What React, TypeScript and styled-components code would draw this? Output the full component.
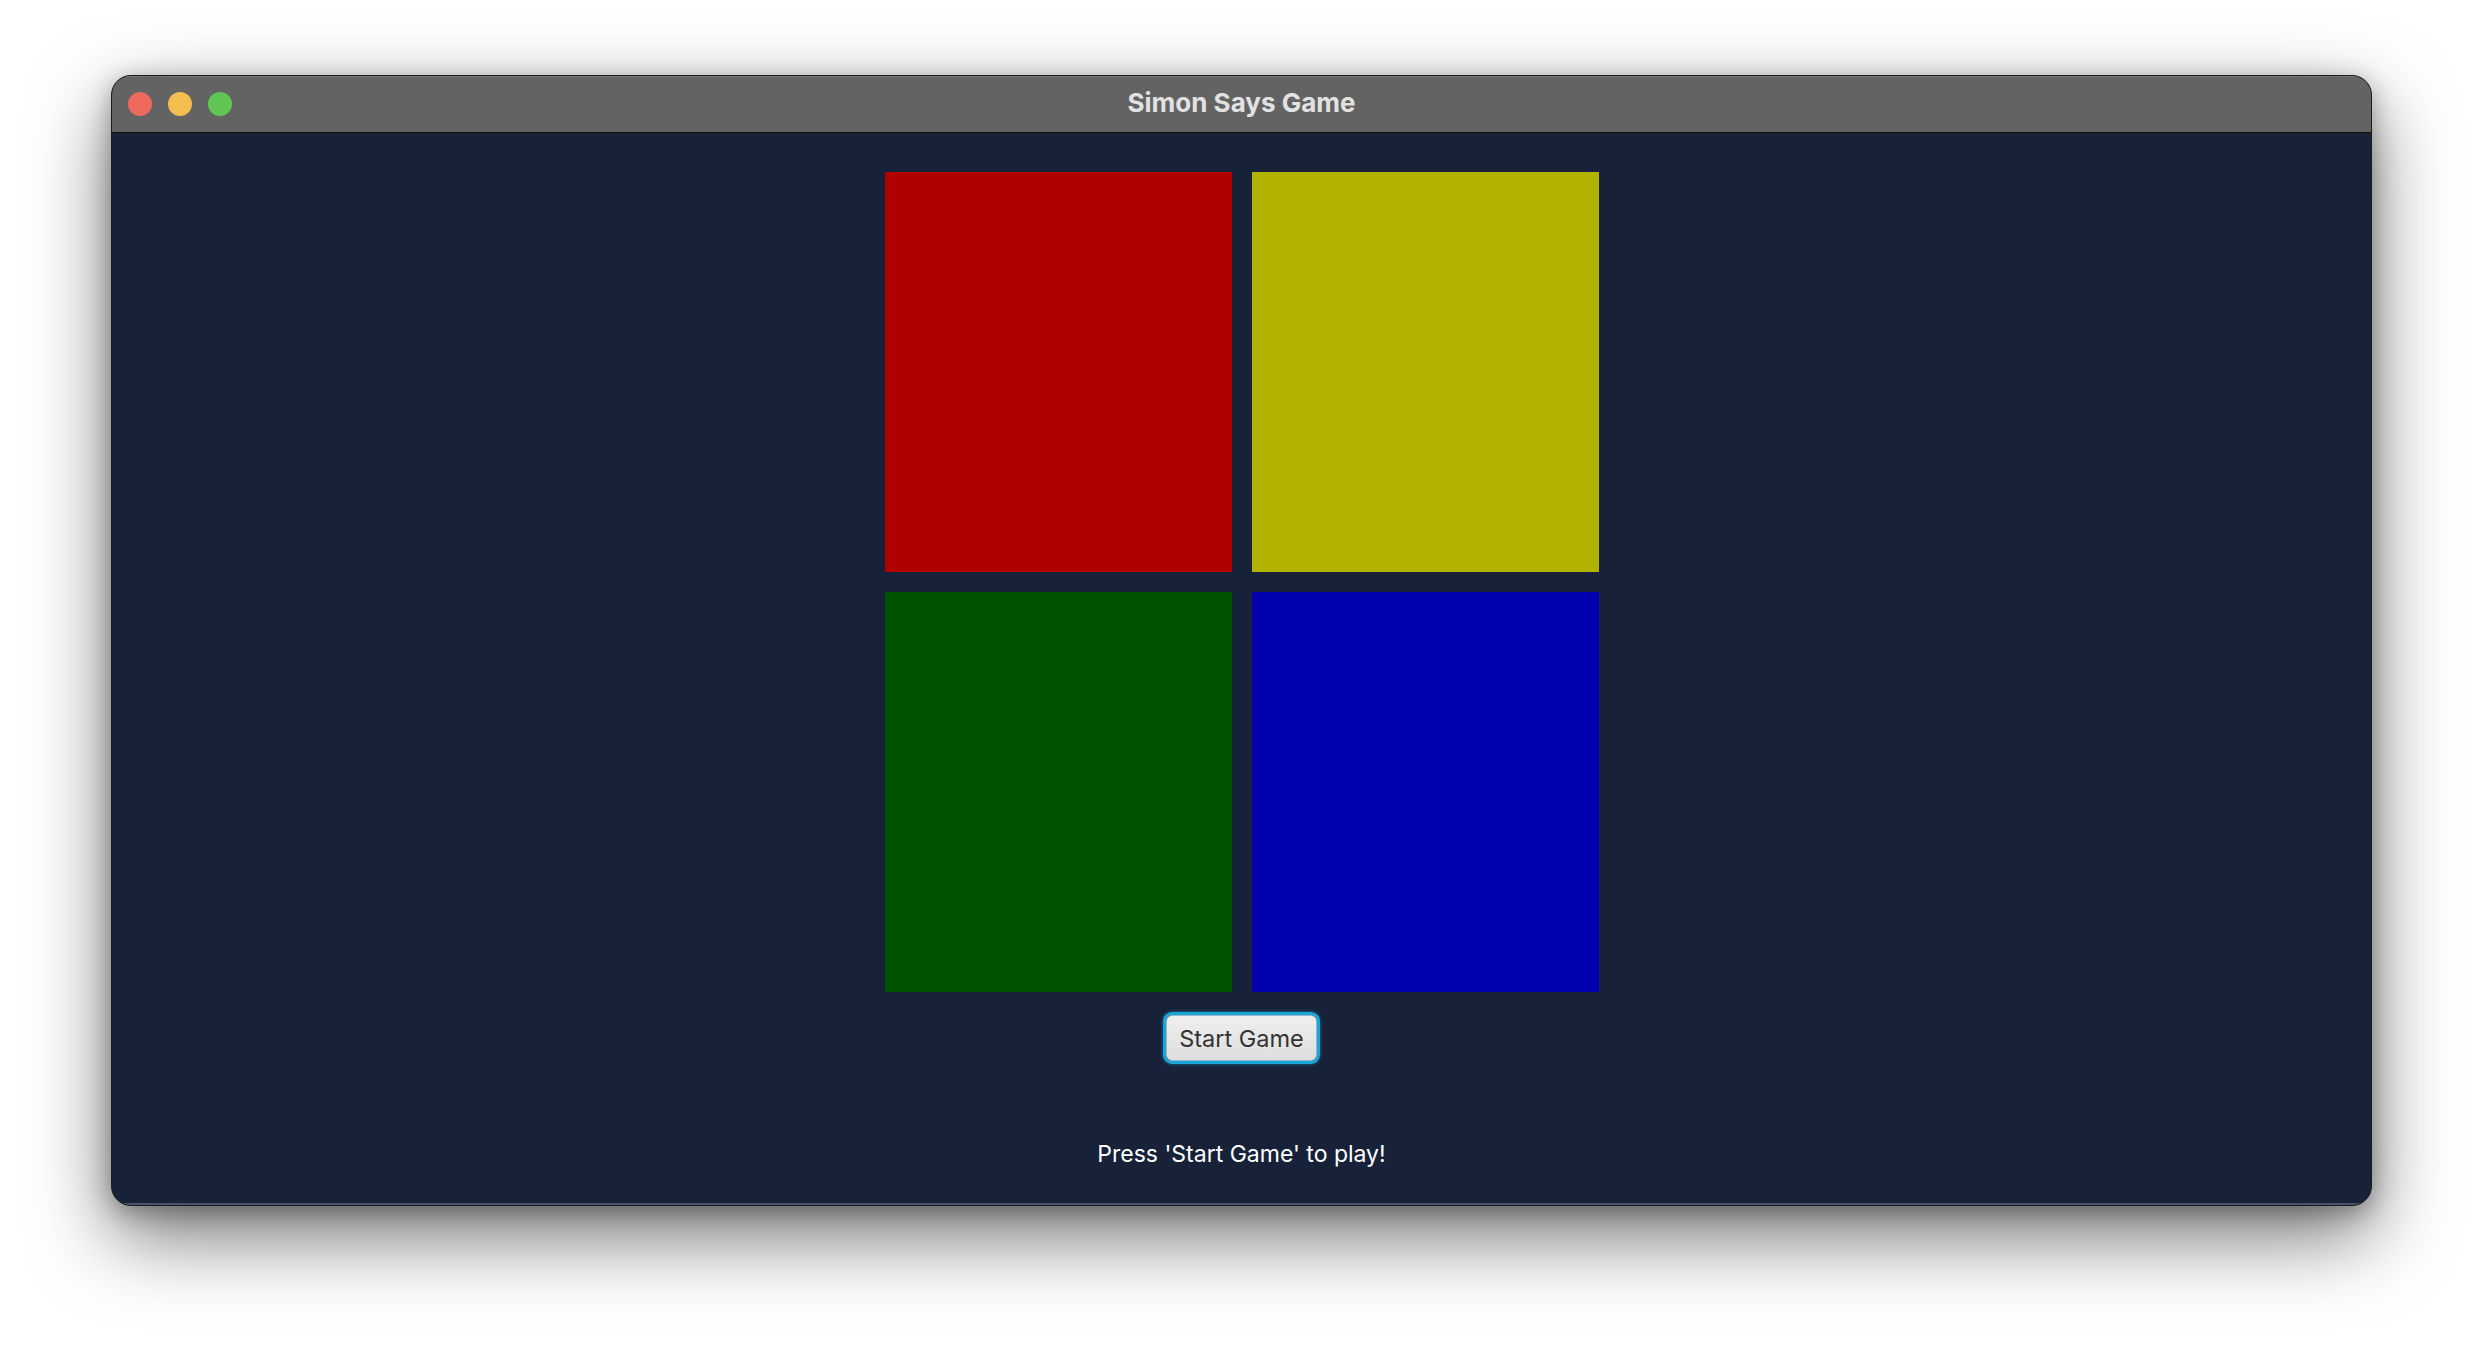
import React from "react";
import styled, { createGlobalStyle } from "styled-components";

const Global = createGlobalStyle`
  html, body { margin: 0; padding: 0; background: #ffffff; }
  body { font-family: Inter, "Noto Sans", "Liberation Sans", sans-serif; }
`;

const Page = styled.div`
  width: 2484px;
  height: 1354px;
  box-sizing: border-box;
  padding: 75px 112px 0 111px;
  background: #ffffff;
`;

const Window = styled.div`
  width: 2261px;
  height: 1131px;
  box-sizing: border-box;
  border: 1px solid #1c1c1c;
  border-radius: 20px;
  overflow: hidden;
  display: flex;
  flex-direction: column;
  background: #172239;
  box-shadow: 0 30px 80px rgba(0, 0, 0, 0.55), 0 6px 24px rgba(0, 0, 0, 0.3);
`;

const TitleBar = styled.div`
  position: relative;
  height: 56px;
  flex: none;
  background: #636363;
  border-bottom: 1px solid #0e0e0e;
  box-shadow: inset 0 1px 0 rgba(255, 255, 255, 0.12);
  display: flex;
  align-items: center;
  justify-content: center;
`;

const Lights = styled.div`
  position: absolute;
  left: 16px;
  top: 16px;
  display: flex;
  gap: 16px;
`;

const Light = styled.span<{ $c: string }>`
  width: 24px;
  height: 24px;
  border-radius: 50%;
  background: ${(p) => p.$c};
`;

const Title = styled.div`
  font-family: Inter, "Liberation Sans", sans-serif;
  font-weight: 700;
  font-size: 26px;
  color: #e2e2e2;
  margin-top: -3px;
`;

const Content = styled.div`
  flex: 1;
  display: flex;
  flex-direction: column;
  align-items: center;
  padding-top: 39px;
  box-shadow: inset 0 -2px 0 #4a5468;
`;

const Board = styled.div`
  display: grid;
  grid-template-columns: 347px 347px;
  grid-template-rows: 400px 400px;
  gap: 20px;
`;

const Pad = styled.div<{ $c: string }>`
  background: ${(p) => p.$c};
`;

const Button = styled.button`
  margin-top: 23px;
  width: 151px;
  height: 46px;
  box-sizing: border-box;
  border: 1px solid #9ab8c8;
  border-radius: 6px;
  background: linear-gradient(#efefef, #dedede);
  color: #333333;
  font-family: Inter, "Liberation Sans", sans-serif;
  font-size: 23.5px;
  padding: 0;
  box-shadow: 0 0 0 3px #1aa6d8, 0 0 3px 4px rgba(26, 166, 216, 0.35);
`;

const Status = styled.div`
  margin-top: 78px;
  color: #ffffff;
  font-family: Inter, "Liberation Sans", sans-serif;
  font-size: 23px;
  line-height: 30px;
`;

export default function App() {
  return (
    <>
      <Global />
      <Page>
        <Window>
          <TitleBar>
            <Lights>
              <Light $c="#ee6a5f" />
              <Light $c="#f5be4f" />
              <Light $c="#61c554" />
            </Lights>
            <Title>Simon Says Game</Title>
          </TitleBar>
          <Content>
            <Board>
              <Pad $c="#b00000" />
              <Pad $c="#b2b200" />
              <Pad $c="#005200" />
              <Pad $c="#0000b0" />
            </Board>
            <Button>Start Game</Button>
            <Status>Press 'Start Game' to play!</Status>
          </Content>
        </Window>
      </Page>
    </>
  );
}
